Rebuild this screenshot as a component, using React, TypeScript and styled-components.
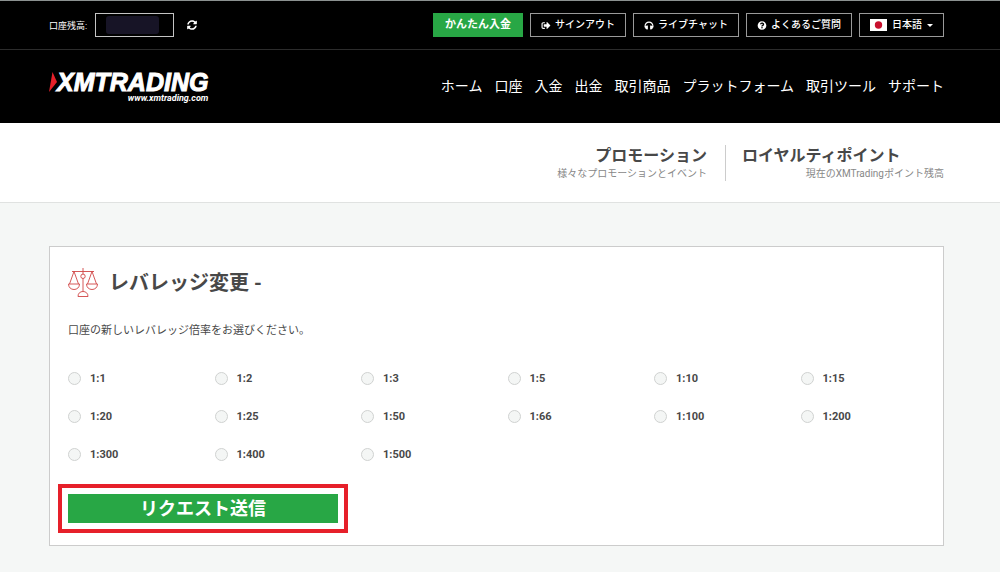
import React from "react";
import styled, { createGlobalStyle, css } from "styled-components";
import { FaSyncAlt, FaSignOutAlt, FaHeadphones, FaQuestionCircle } from "react-icons/fa";

const GlobalStyle = createGlobalStyle`
  *, *::before, *::after { box-sizing: border-box; }
  body {
    margin: 0;
    background: #f5f7f6;
    color: #484848;
    font-family: Roboto, "Noto Sans CJK JP", sans-serif;
    font-size: 11px;
  }
  button, input, select { font: inherit; color: inherit; }
  a { color: inherit; text-decoration: none; }
`;

const gutter = css`
  padding-left: 49px;
  padding-right: 56px;
`;

const TopBar = styled.div`
  ${gutter}
  display: flex;
  align-items: center;
  justify-content: space-between;
  height: 50px;
  background: #000;
  color: #fff;
  border-top: 1px solid #8b9190;
  border-bottom: 1px solid #2c2c2c;
`;

const Balance = styled.div`
  display: flex;
  align-items: center;
`;

const BalanceLabel = styled.label`
  font-size: 9px;
  margin-right: 8px;
`;

const BalanceField = styled.div`
  position: relative;
  width: 79px;
  height: 24px;
`;

const BalanceInput = styled.input`
  width: 100%;
  height: 100%;
  padding: 0 8px;
  background: #000;
  border: 1px solid #c4c4c4;
  border-radius: 0;
`;

const BalanceMask = styled.span`
  position: absolute;
  inset: 3px 15px 3px 11px;
  border-radius: 3px;
  background: #171426;
`;

const RefreshButton = styled.button`
  display: flex;
  margin-left: 13px;
  padding: 0;
  border: 0;
  background: none;
  font-size: 10px;
`;

const TopActions = styled.div`
  display: flex;
  gap: 7px;
`;

const topButton = css`
  display: flex;
  align-items: center;
  height: 24px;
  padding: 0 10px;
  border: 1px solid #9a9a9a;
  font-size: 10px;
  font-weight: 500;
  line-height: 16px;
`;

const TopLink = styled.a`
  ${topButton}
  gap: 4px;
  svg { width: 10px; height: 9px; }
`;

const DepositLink = styled.a`
  ${topButton}
  padding: 0 11px;
  border-color: #28a745;
  background: #28a745;
  font-size: 11px;
  font-weight: 700;
`;

const Language = styled.div`
  ${topButton}
  gap: 5px;
`;

const LanguageSelect = styled.select`
  appearance: none;
  padding: 0;
  border: 0;
  background: #000;
`;

const Caret = styled.svg`
  width: 6px;
  height: 3px;
  pointer-events: none;
`;

const Header = styled.header`
  ${gutter}
  display: flex;
  align-items: center;
  justify-content: space-between;
  height: 73px;
  background: #000;
  color: #fff;
`;

const Logo = styled.a`
  display: grid;
  grid-template-columns: 8px auto;
  align-items: center;
  font-family: "Liberation Sans", sans-serif;
  font-style: italic;
  font-weight: 700;
`;

const LogoMark = styled.svg`
  width: 8px;
  height: 20px;
`;

const LogoName = styled.span`
  font-size: 25px;
  line-height: 24px;
  -webkit-text-stroke: 1px #fff;
`;

const LogoSite = styled.span`
  grid-column: 1 / -1;
  justify-self: end;
  font-family: Roboto, sans-serif;
  font-size: 9px;
  line-height: 9px;
`;

const Nav = styled.nav`
  display: flex;
  gap: 12px;
  padding-bottom: 2px;
  font-size: 14px;
  line-height: 20px;
`;

const SubBar = styled.div`
  ${gutter}
  display: flex;
  align-items: center;
  justify-content: flex-end;
  height: 80px;
  background: #fff;
  border-bottom: 1px solid #e0e2e1;
`;

const Highlight = styled.a<{ $divided?: boolean }>`
  display: flex;
  flex-direction: column;
  ${({ $divided }) =>
    $divided
      ? css`
          min-width: 219px;
          padding-left: 16px;
          border-left: 1px solid #ccc;
        `
      : css`
          align-items: flex-end;
          padding-right: 18px;
        `}
`;

const HighlightTitle = styled.strong`
  font-size: 16px;
  font-weight: 700;
  line-height: 22px;
`;

const HighlightNote = styled.span`
  align-self: flex-end;
  color: #888;
  font-size: 10px;
  line-height: 14px;
`;

const Main = styled.main`
  ${gutter}
  padding-top: 43px;
  padding-bottom: 26px;
`;

const Card = styled.form`
  padding: 18px 18px 22px;
  background: #fff;
  border: 1px solid #ccc;
`;

const CardTitle = styled.h1`
  display: flex;
  align-items: center;
  gap: 11px;
  margin: 0;
  font-size: 20px;
  font-weight: 700;
  line-height: 36px;
`;

const ScalesIcon = styled.svg`
  width: 30px;
  height: 30px;
`;

const Options = styled.fieldset`
  margin: 0;
  padding: 0;
  border: 0;
`;

const Prompt = styled.legend`
  padding: 20px 0 18px;
  line-height: 20px;
`;

const OptionGrid = styled.div`
  display: grid;
  grid-template-columns: repeat(6, 1fr);
  column-gap: 22px;
`;

const Option = styled.label`
  display: flex;
  align-items: center;
  gap: 9px;
  height: 38px;
  font-weight: 700;
`;

const Radio = styled.input`
  appearance: none;
  width: 13px;
  height: 13px;
  margin: 0;
  border: 1px solid #d0d2d1;
  border-radius: 50%;
  background: #f4f6f5;
  &:checked { border: 4px solid #28a745; }
`;

const SubmitFrame = styled.div`
  width: 290px;
  margin: 11px -10px -10px;
  padding: 6px;
  border: 4px solid #e6202a;
`;

const SubmitButton = styled.button`
  display: block;
  width: 100%;
  height: 29px;
  padding: 0;
  border: 0;
  background: #28a745;
  color: #fff;
  font-size: 18px;
  font-weight: 700;
  line-height: 28px;
`;

const navItems = ["ホーム", "口座", "入金", "出金", "取引商品", "プラットフォーム", "取引ツール", "サポート"];
const ratios = [1, 2, 3, 5, 10, 15, 20, 25, 50, 66, 100, 200, 300, 400, 500];

export default function App() {
  return (
    <>
      <GlobalStyle />
      <TopBar>
        <Balance>
          <BalanceLabel htmlFor="balance">口座残高:</BalanceLabel>
          <BalanceField>
            <BalanceInput id="balance" readOnly />
            <BalanceMask />
          </BalanceField>
          <RefreshButton type="button" aria-label="更新">
            <FaSyncAlt />
          </RefreshButton>
        </Balance>
        <TopActions>
          <DepositLink href="#">かんたん入金</DepositLink>
          <TopLink href="#"><FaSignOutAlt />サインアウト</TopLink>
          <TopLink href="#"><FaHeadphones />ライブチャット</TopLink>
          <TopLink href="#"><FaQuestionCircle />よくあるご質問</TopLink>
          <Language>
            <svg width="17" height="12" viewBox="0 0 17 12" aria-hidden="true">
              <rect width="17" height="12" fill="#fff" />
              <circle cx="8.5" cy="6" r="3.7" fill="#c8102e" />
            </svg>
            <LanguageSelect aria-label="言語">
              <option>日本語</option>
            </LanguageSelect>
            <Caret viewBox="0 0 6 3" aria-hidden="true"><path d="M0 0h6L3 3z" fill="#fff" /></Caret>
          </Language>
        </TopActions>
      </TopBar>

      <Header>
        <Logo href="#">
          <LogoMark viewBox="0 0 8 20" aria-hidden="true"><path d="M3.500 0 8 10 0 20z" fill="#e5202b" /></LogoMark>
          <LogoName>XMTRADING</LogoName>
          <LogoSite>www.xmtrading.com</LogoSite>
        </Logo>
        <Nav>
          {navItems.map((item) => <a href="#" key={item}>{item}</a>)}
        </Nav>
      </Header>

      <SubBar>
        <Highlight href="#">
          <HighlightTitle>プロモーション</HighlightTitle>
          <HighlightNote>様々なプロモーションとイベント</HighlightNote>
        </Highlight>
        <Highlight href="#" $divided>
          <HighlightTitle>ロイヤルティポイント</HighlightTitle>
          <HighlightNote>現在のXMTradingポイント残高</HighlightNote>
        </Highlight>
      </SubBar>

      <Main>
        <Card onSubmit={(e) => e.preventDefault()}>
          <CardTitle>
            <ScalesIcon viewBox="0 0 30 30" fill="none" stroke="#d04545" strokeWidth="0.9" aria-hidden="true">
              <path d="M15 0v6M15 10.500v13M4 3.500h22" />
              <circle cx="15" cy="8.300" r="2.200" />
              <path d="M6 3.500 1.500 16M6 3.500 10.500 16M24 3.500 19.500 16M24 3.500 28.500 16" />
              <path d="M.5 16h11c0 3.500-2.500 5.500-5.500 5.500S.5 19.500.5 16zM18.500 16h11c0 3.500-2.500 5.500-5.500 5.500s-5.500-2-5.500-5.500z" />
              <path d="M10 28.500c0-3.300 2.200-5 5-5s5 1.700 5 5z" />
            </ScalesIcon>
            レバレッジ変更 -
          </CardTitle>
          <Options>
            <Prompt>口座の新しいレバレッジ倍率をお選びください。</Prompt>
            <OptionGrid>
              {ratios.map((ratio) => (
                <Option key={ratio}>
                  <Radio type="radio" name="leverage" value={ratio} />
                  1:{ratio}
                </Option>
              ))}
            </OptionGrid>
          </Options>
          <SubmitFrame>
            <SubmitButton type="submit">リクエスト送信</SubmitButton>
          </SubmitFrame>
        </Card>
      </Main>
    </>
  );
}
